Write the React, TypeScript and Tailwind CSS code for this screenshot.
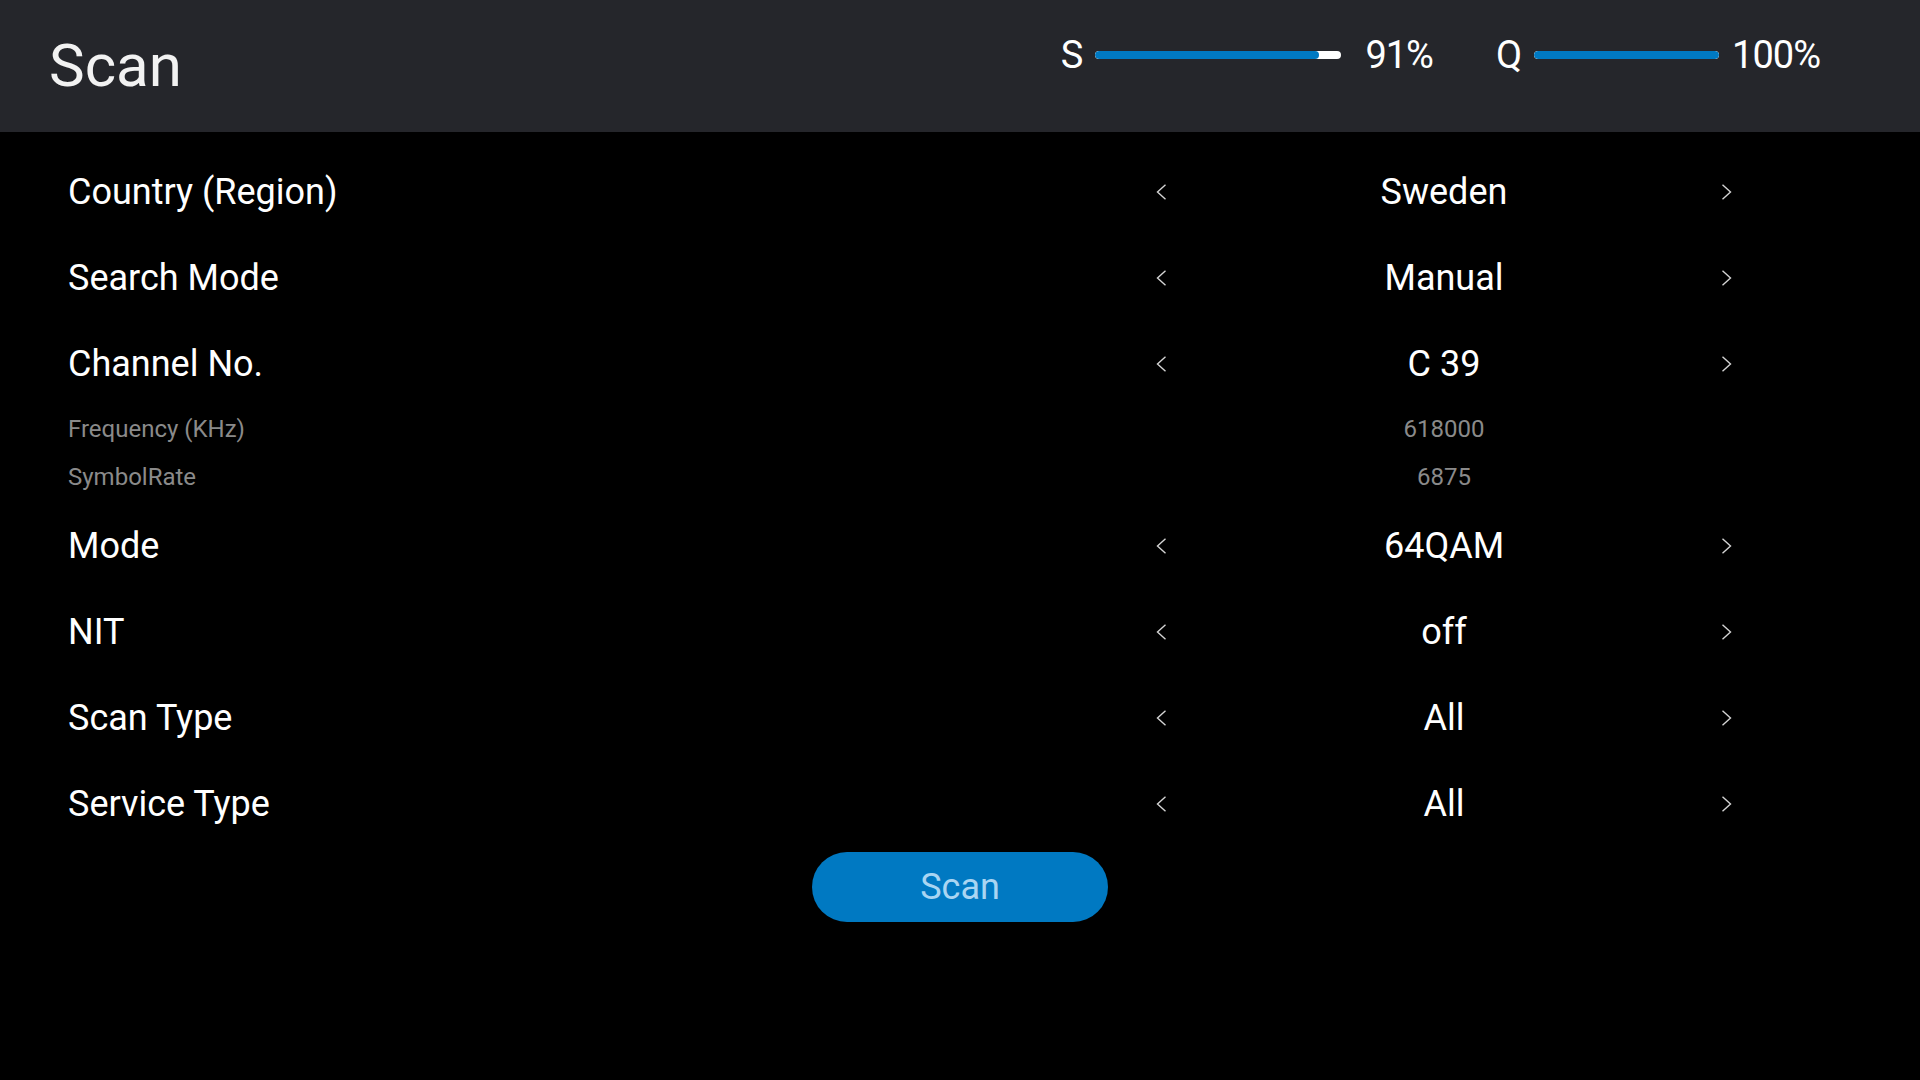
import React from 'react'

type Row = { label: string; value: string; small?: boolean }

const rows: Row[] = [
  { label: 'Country (Region)', value: 'Sweden' },
  { label: 'Search Mode', value: 'Manual' },
  { label: 'Channel No.', value: 'C 39' },
  { label: 'Frequency (KHz)', value: '618000', small: true },
  { label: 'SymbolRate', value: '6875', small: true },
  { label: 'Mode', value: '64QAM' },
  { label: 'NIT', value: 'off' },
  { label: 'Scan Type', value: 'All' },
  { label: 'Service Type', value: 'All' },
]

function Chevron({ dir }: { dir: 'left' | 'right' }) {
  return (
    <svg width="11" height="16" viewBox="0 0 11 16" className="shrink-0">
      <polyline
        points={dir === 'left' ? '9.5,0.8 1.5,8 9.5,15.2' : '1.5,0.8 9.5,8 1.5,15.2'}
        fill="none"
        stroke="#d4d4d4"
        strokeWidth={1.4}
      />
    </svg>
  )
}

function Meter({ letter, value, width }: { letter: string; value: number; width: number }) {
  return (
    <div className="flex items-center">
      <span className="text-[38px] leading-none text-white">{letter}</span>
      <div className="ml-[12px] h-[8px] rounded-full bg-white overflow-hidden" style={{ width }}>
        <div className="h-full rounded-full bg-[#0079c2]" style={{ width: `${value}%` }} />
      </div>
    </div>
  )
}

export default function App() {
  return (
    <div className="w-[1920px] h-[1080px] bg-black font-[Roboto,sans-serif] overflow-hidden">
      <header className="h-[132px] bg-[#25262b] flex items-center justify-between pl-[49px] pr-[100px]">
        <h1 className="text-[60px] leading-none text-[#f2f2f2]">Scan</h1>
        <div className="flex items-center mb-[22px]">
          <Meter letter="S" value={91} width={246} />
          <span className="ml-[24px] text-[38px] leading-none tracking-[-1px] text-white">91%</span>
          <div className="ml-[63px]">
            <Meter letter="Q" value={100} width={185} />
          </div>
          <span className="ml-[13px] text-[38px] leading-none tracking-[-1px] text-white">100%</span>
        </div>
      </header>

      <main className="pt-[17px]">
        {rows.map((r) => (
          <div
            key={r.label}
            className={`flex items-center pl-[68px] pr-[188px] ${r.small ? 'h-[48px] pb-[5px]' : 'h-[86px]'}`}
          >
            <div className={`flex-1 ${r.small ? 'text-[24px] text-[#8a8a8a]' : 'text-[36px] text-white'}`}>
              {r.label}
            </div>
            <div className="w-[576px] flex items-center">
              {r.small ? <span className="w-[11px]" /> : <Chevron dir="left" />}
              <div className={`flex-1 text-center ${r.small ? 'text-[24px] text-[#8a8a8a]' : 'text-[36px] text-white'}`}>
                {r.value}
              </div>
              {r.small ? <span className="w-[11px]" /> : <Chevron dir="right" />}
            </div>
          </div>
        ))}
        <div className="flex justify-center mt-[5px]">
          <button className="w-[296px] h-[70px] rounded-full bg-[#0079c2] text-[36px] text-[#a9d5f2]">
            Scan
          </button>
        </div>
      </main>
    </div>
  )
}
